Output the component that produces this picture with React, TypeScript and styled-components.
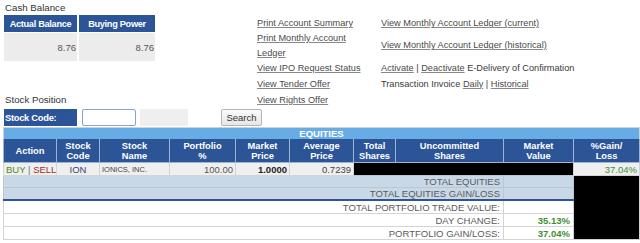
import React from 'react';
import styled, { createGlobalStyle } from 'styled-components';

const GlobalStyle = createGlobalStyle`
  body {
    margin: 0;
    background: #fff;
    font-family: "Liberation Sans", Arial, sans-serif;
  }
`;

const Page = styled.div`
  width: 640px;
  height: 243px;
  overflow: hidden;
  padding: 0 2px 0 3px;
  box-sizing: border-box;
`;

const Top = styled.div`
  display: flex;
`;

const LeftCol = styled.div`
  width: 253px;
  flex-shrink: 0;
  padding-left: 1px;
  display: flex;
  flex-direction: column;
`;

const SectionTitle = styled.div<{ $bottom?: boolean }>`
  font-size: 9.7px;
  line-height: 12px;
  color: #333;
  padding: ${(p) => (p.$bottom ? '0 0 2px 1px' : '2px 0 0 1px')};
  margin-top: ${(p) => (p.$bottom ? 'auto' : '0')};
`;

const CashGrid = styled.div`
  display: grid;
  grid-template-columns: 73px 76px;
  grid-template-rows: 17px 28px;
  column-gap: 2px;
  row-gap: 1px;
  margin-top: 1px;
`;

const BlueHead = styled.div`
  background: #2c5598;
  color: #fff;
  font-weight: bold;
  font-size: 9.2px;
  letter-spacing: -0.3px;
  display: flex;
  align-items: center;
  justify-content: center;
`;

const CashValue = styled.div`
  background: #ececec;
  color: #555;
  font-size: 9.5px;
  display: flex;
  align-items: center;
  justify-content: flex-end;
  padding-right: 1px;
`;

const LinkGrid = styled.div`
  margin-top: 16px;
  display: grid;
  grid-template-columns: 124px 250px;
  grid-template-rows: 15px 29px 16px 16px 16px;
`;

const LinkCell = styled.div`
  display: flex;
  align-items: center;
  font-size: 9.2px;
  line-height: 14.5px;
  color: #3a3a3a;
  padding-right: 10px;
  white-space: pre;
`;

const Wrap = styled.span`
  white-space: normal;
`;

const Link = styled.a`
  color: #4a4a4a;
  text-decoration: underline;
  text-decoration-color: #888;
  cursor: pointer;
`;

const StockRow = styled.div`
  display: flex;
  height: 17px;
  margin: 1px 0 0 1px;
`;

const CodeLabel = styled(BlueHead)`
  width: 73px;
  justify-content: flex-start;
  padding-left: 1px;
  box-sizing: border-box;
  font-size: 9.4px;
`;

const CodeInput = styled.input`
  width: 54px;
  margin-left: 5px;
  box-sizing: border-box;
  border: 1px solid #86a4d6;
  border-radius: 2px;
  padding: 0 2px;
  font-size: 9px;
  outline: none;
`;

const GrayBox = styled.div`
  width: 48px;
  margin-left: 4px;
  background: #efefef;
`;

const SearchButton = styled.button`
  width: 41px;
  margin-left: 33px;
  padding: 0;
  font-family: "Liberation Sans", Arial, sans-serif;
  font-size: 9.5px;
  color: #333;
  border: 1px solid #b4b4b4;
  border-radius: 2px;
  background: linear-gradient(#fbfbfb, #e6e6e6);
`;

const Table = styled.table`
  margin-top: 1px;
  width: 636px;
  table-layout: fixed;
  border-collapse: collapse;
  border: 1px solid #d2d2d2;
  font-size: 9.5px;
`;

const BarCell = styled.td`
  background: #68ace6;
  color: #fff;
  font-weight: bold;
  text-align: center;
  height: 11px;
  padding: 0;
  line-height: 11px;
`;

const Th = styled.th`
  background: #2c5598;
  color: #fff;
  font-weight: bold;
  font-size: 9.3px;
  line-height: 10px;
  height: 23px;
  padding: 0;
  border: 1px solid #9fb3d3;
  border-top: 0;
  text-align: center;
`;

const Td = styled.td<{ $align?: string; $bold?: boolean; $color?: string; $small?: boolean }>`
  background: #efefef;
  height: 12px;
  padding: 0 2px;
  border: 1px solid #d4d4d4;
  text-align: ${(p) => p.$align || 'right'};
  font-weight: ${(p) => (p.$bold ? 'bold' : 'normal')};
  color: ${(p) => p.$color || '#555'};
  font-size: ${(p) => (p.$small ? '7.5px' : '9.5px')};
  white-space: nowrap;
  overflow: hidden;
`;

const BlackCell = styled.td`
  background: #000;
  padding: 0;
  border: 0;
`;

const TotalCell = styled.td<{ $white?: boolean; $rule?: boolean; $green?: boolean }>`
  background: ${(p) => (p.$white ? '#fff' : '#c9d8e7')};
  height: ${(p) => (p.$white ? '12px' : '11px')};
  padding: 0 3px 0 2px;
  text-align: right;
  color: ${(p) => (p.$green ? '#3f8f32' : '#5a5a5a')};
  font-weight: ${(p) => (p.$green ? 'bold' : 'normal')};
  border: 1px solid ${(p) => (p.$white ? '#d4d4d4' : '#b9c7d4')};
  border-top: ${(p) => (p.$rule ? '2px solid #2c5598' : undefined)};
  white-space: nowrap;
`;

const Buy = styled.span`
  color: #4b8b2b;
`;

const Sell = styled.span`
  color: #9b2e2e;
`;

const Bar = styled.span`
  color: #777;
`;

const cols = [53, 43, 70, 66, 54, 64, 42, 108, 70, 66];

const headers = [
  'Action',
  'Stock\nCode',
  'Stock\nName',
  'Portfolio\n%',
  'Market\nPrice',
  'Average\nPrice',
  'Total\nShares',
  'Uncommitted\nShares',
  'Market\nValue',
  '%Gain/\nLoss',
];

const totals: { label: string; value?: string; white?: boolean; rule?: boolean }[] = [
  { label: 'TOTAL EQUITIES' },
  { label: 'TOTAL EQUITIES GAIN/LOSS' },
  { label: 'TOTAL PORTFOLIO TRADE VALUE:', white: true, rule: true },
  { label: 'DAY CHANGE:', value: '35.13%', white: true },
  { label: 'PORTFOLIO GAIN/LOSS:', value: '37.04%', white: true },
];

export default function App() {
  return (
    <>
      <GlobalStyle />
      <Page>
        <Top>
          <LeftCol>
            <SectionTitle>Cash Balance</SectionTitle>
            <CashGrid>
              <BlueHead>Actual Balance</BlueHead>
              <BlueHead>Buying Power</BlueHead>
              <CashValue>8.76</CashValue>
              <CashValue>8.76</CashValue>
            </CashGrid>
            <SectionTitle $bottom>Stock Position</SectionTitle>
          </LeftCol>
          <LinkGrid>
            <LinkCell>
              <Link>Print Account Summary</Link>
            </LinkCell>
            <LinkCell>
              <Link>View Monthly Account Ledger (current)</Link>
            </LinkCell>
            <LinkCell>
              <Wrap>
                <Link>Print Monthly Account Ledger</Link>
              </Wrap>
            </LinkCell>
            <LinkCell>
              <Link>View Monthly Account Ledger (historical)</Link>
            </LinkCell>
            <LinkCell>
              <Link>View IPO Request Status</Link>
            </LinkCell>
            <LinkCell>
              <Link>Activate</Link> | <Link>Deactivate</Link> E-Delivery of Confirmation
            </LinkCell>
            <LinkCell>
              <Link>View Tender Offer</Link>
            </LinkCell>
            <LinkCell>
              Transaction Invoice <Link>Daily</Link> | <Link>Historical</Link>
            </LinkCell>
            <LinkCell>
              <Link>View Rights Offer</Link>
            </LinkCell>
          </LinkGrid>
        </Top>

        <StockRow>
          <CodeLabel>Stock Code:</CodeLabel>
          <CodeInput type="text" />
          <GrayBox />
          <SearchButton>Search</SearchButton>
        </StockRow>

        <Table>
          <colgroup>
            {cols.map((w, i) => (
              <col key={i} style={{ width: w }} />
            ))}
          </colgroup>
          <tbody>
            <tr>
              <BarCell colSpan={10}>EQUITIES</BarCell>
            </tr>
            <tr>
              {headers.map((h) => (
                <Th key={h}>
                  {h.split('\n').map((line, i) => (
                    <React.Fragment key={i}>
                      {i > 0 && <br />}
                      {line}
                    </React.Fragment>
                  ))}
                </Th>
              ))}
            </tr>
            <tr>
              <Td $align="left">
                <Buy>BUY</Buy> <Bar>|</Bar> <Sell>SELL</Sell>
              </Td>
              <Td $align="center" $color="#33457a">
                ION
              </Td>
              <Td $align="left" $small $color="#444">
                IONICS, INC.
              </Td>
              <Td>100.00</Td>
              <Td $bold $color="#222">
                1.0000
              </Td>
              <Td $color="#444">0.7239</Td>
              <BlackCell colSpan={3} />
              <Td $color="#3f8f32">37.04%</Td>
            </tr>
            {totals.map((t, i) => (
              <tr key={t.label}>
                <TotalCell colSpan={8} $white={t.white} $rule={t.rule}>
                  {t.label}
                </TotalCell>
                <TotalCell $white={t.white} $rule={t.rule} $green>
                  {t.value}
                </TotalCell>
                {i === 0 && <BlackCell rowSpan={5} />}
              </tr>
            ))}
          </tbody>
        </Table>
      </Page>
    </>
  );
}
